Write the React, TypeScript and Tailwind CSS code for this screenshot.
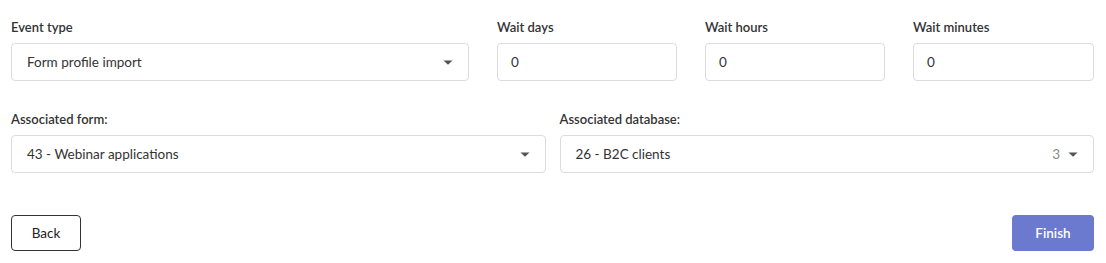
import React from "react";

function Caret() {
  return (
    <svg width="10" height="5" viewBox="0 0 10 5" className="shrink-0">
      <path d="M0.5 0.5 L9.5 0.5 L5 4.8 Z" fill="#555" />
    </svg>
  );
}

function Label({ children }: { children: React.ReactNode }) {
  return (
    <div className="text-[13px] leading-[20px] font-semibold text-[#333] mb-[6px]">{children}</div>
  );
}

function SelectBox({ value, count }: { value: string; count?: string }) {
  return (
    <div className="h-[38px] border border-[#dcdcdc] rounded-[4px] bg-white flex items-center pl-[15px] pr-[15px] text-[13.5px] text-[#333]">
      <span className="flex-1">{value}</span>
      {count && <span className="text-[#888] mr-[8px]">{count}</span>}
      <Caret />
    </div>
  );
}

function InputBox({ value }: { value: string }) {
  return (
    <div className="h-[38px] border border-[#dcdcdc] rounded-[4px] bg-white flex items-center pl-[13px] text-[13.5px] text-[#333]">
      {value}
    </div>
  );
}

export default function App() {
  return (
    <div
      className="w-[1106px] h-[263px] bg-white pl-[11px] pr-[12px] pt-[17px] flex flex-col"
      style={{ fontFamily: "Lato, 'Noto Sans', sans-serif" }}
    >
      <div className="flex gap-[28px]">
        <div className="w-[458px]">
          <Label>Event type</Label>
          <SelectBox value="Form profile import" />
        </div>
        <div className="w-[180px]">
          <Label>Wait days</Label>
          <InputBox value="0" />
        </div>
        <div className="w-[180px]">
          <Label>Wait hours</Label>
          <InputBox value="0" />
        </div>
        <div className="flex-1">
          <Label>Wait minutes</Label>
          <InputBox value="0" />
        </div>
      </div>
      <div className="flex gap-[14px] mt-[28px]">
        <div className="flex-1">
          <Label>Associated form:</Label>
          <SelectBox value="43 - Webinar applications" />
        </div>
        <div className="flex-1">
          <Label>Associated database:</Label>
          <SelectBox value="26 - B2C clients" count="3" />
        </div>
      </div>
      <div className="flex justify-between mt-[42px]">
        <button className="w-[70px] h-[36px] border border-[#333] rounded-[4px] bg-white text-[13.5px] text-[#222]">
          Back
        </button>
        <button className="w-[82px] h-[36px] rounded-[4px] bg-[#6b79cf] text-white text-[13.5px] font-semibold">
          Finish
        </button>
      </div>
    </div>
  );
}
